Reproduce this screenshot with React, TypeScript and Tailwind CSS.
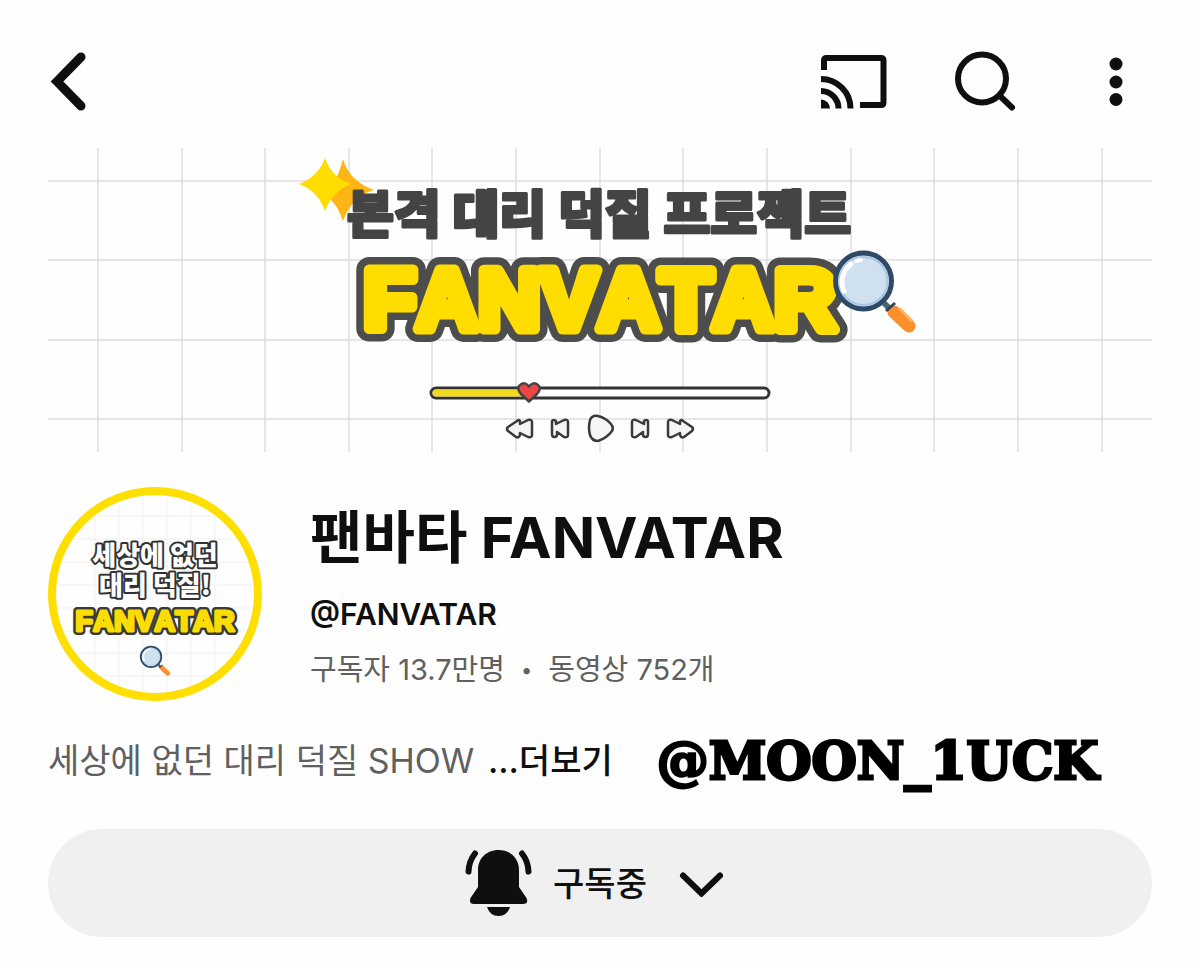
const gridX = [98, 182, 265, 349, 432, 516, 600, 683, 767, 851, 934, 1018, 1102];
const gridY = [181, 260, 340, 419];

function BackIcon() {
  return (
    <svg className="h-15 w-10" viewBox="48 51 40 60" fill="none" aria-hidden="true">
      <path d="M81 57 57 81.500 81 106" stroke="#0f0f0f" strokeWidth="9" strokeLinecap="round" />
    </svg>
  );
}

function CastIcon() {
  return (
    <svg className="h-15 w-17" viewBox="820 51 68 60" aria-hidden="true">
      <g fill="none" stroke="#0f0f0f" strokeWidth="6">
        <path d="M824 70V60.500Q824 58 826.500 58H881Q883.500 58 883.500 60.500V102.500Q883.500 105 881 105H860" />
        <path d="M821 79A29.500 29.500 0 0 1 850.500 108.500" />
        <path d="M821 91A17.500 17.500 0 0 1 838.500 108.500" />
      </g>
      <path d="M821 99.500A9 9 0 0 1 830 108.500H821Z" fill="#0f0f0f" />
    </svg>
  );
}

function SearchIcon() {
  return (
    <svg className="h-15 w-16" viewBox="952 51 64 60" fill="none" stroke="#0f0f0f" aria-hidden="true">
      <circle cx="982" cy="78.500" r="24" strokeWidth="6" />
      <path d="M1000 96 1012 107.500" strokeWidth="6" strokeLinecap="round" />
    </svg>
  );
}

function MoreIcon() {
  return (
    <svg className="h-15 w-4" viewBox="1108 51 16 60" fill="#0f0f0f" aria-hidden="true">
      <circle cx="1116" cy="64" r="6.500" />
      <circle cx="1116" cy="82" r="6.500" />
      <circle cx="1116" cy="99.500" r="6.500" />
    </svg>
  );
}

function Magnifier() {
  return (
    <g>
      <path d="M884 303 893 312" stroke="#4a6477" strokeWidth="6" />
      <path d="M894 312 909 326" stroke="#fa8f2b" strokeWidth="13" strokeLinecap="round" />
      <path d="M886 311 895 303" stroke="#2f4358" strokeWidth="3" />
      <path d="M900 309 912 321" stroke="#ffb560" strokeWidth="3" strokeLinecap="round" />
      <circle cx="863.500" cy="281" r="28" fill="#cfe0f1" stroke="#2e4a66" strokeWidth="5" />
      <circle cx="863.500" cy="281" r="24" fill="none" stroke="#a9c7e2" strokeWidth="2" />
      <path d="M844 291A22 22 0 0 1 851 264" fill="none" stroke="#fff" strokeWidth="5" strokeLinecap="round" />
      <path d="M856 261 861 260" stroke="#fff" strokeWidth="4" strokeLinecap="round" />
    </g>
  );
}

function Banner() {
  return (
    <svg className="block h-auto w-full" viewBox="48 148 1104 304" role="img" aria-label="본격 대리 덕질 프로젝트 FANVATAR">
      <g stroke="#dedede" strokeWidth="1.500">
        {gridX.map((x) => (
          <path key={x} d={`M${x} 148V452`} />
        ))}
        {gridY.map((y) => (
          <path key={y} d={`M48 ${y}H1152`} />
        ))}
      </g>

      <path d="M343 159Q349 181 374 190Q352 196 343 221Q338 205 326 195Q338 180 343 159Z" fill="#fdb515" />
      <path d="M325 158Q332 178 351 184Q332 192 325 211Q318 191 299 184Q318 177 325 158Z" fill="#ffdd00" />

      <text
        className="font-['Noto_Sans_CJK_KR',sans-serif] text-[51px] font-black"
        x="599"
        y="233"
        textAnchor="middle"
        fill="#444"
        stroke="#444"
        strokeWidth="3"
        strokeLinejoin="round"
      >
        본격 대리 덕질 프로젝트
      </text>

      <g
        className="font-['Liberation_Sans',sans-serif] text-[86px] font-bold [font-kerning:none]"
        textAnchor="middle"
        strokeLinejoin="round"
      >
        <text x="600" y="329" fill="#4d4d4d" stroke="#4d4d4d" strokeWidth="26" aria-hidden="true">
          FANVATAR
        </text>
        <text x="600" y="329" fill="#ffdd00" stroke="#ffdd00" strokeWidth="11">
          FANVATAR
        </text>
      </g>

      <Magnifier />

      <rect x="431" y="388" width="338" height="10" rx="5" fill="#fff" stroke="#333" strokeWidth="3" />
      <path d="M436 389.500H527V396.500H436Q432.500 396.500 432.500 393T436 389.500Z" fill="#f2da20" />
      <path
        d="M529 401.500 521 394Q516 388 520 385Q525 381 529 386.500Q533 381 538 385Q542 388 537 394Z"
        fill="#f04545"
        stroke="#444"
        strokeWidth="2.500"
        strokeLinejoin="round"
      />

      <g fill="#f5f5f5" stroke="#3a3a3a" strokeWidth="2.500" strokeLinejoin="round">
        <path d="M517 421Q519 419 520 421V424L528 420Q532 419 532 422V435Q532 438 528 437L520 433V435Q519 438 516 437L508 431Q506 429 508 427Z" />
        <path d="M552 421Q553 419 556 421V424L564 420Q568 419 568 422V435Q568 438 564 437L557 432V435Q557 437 554 437Q552 437 552 434Z" />
        <path d="M590 420Q592 415 598 416Q606 418 611 424Q614 428 612 431Q607 438 598 441Q592 441 590 435Q588 428 590 420Z" />
        <path d="M648 421Q647 419 644 421V424L636 420Q632 419 632 422V435Q632 438 636 437L643 432V435Q643 437 646 437Q648 437 648 434Z" />
        <path d="M683 421Q681 419 680 421V424L672 420Q668 419 668 422V435Q668 438 672 437L680 433V435Q681 438 684 437L692 431Q694 429 692 427Z" />
      </g>
    </svg>
  );
}

function Avatar() {
  return (
    <svg className="size-[214px] shrink-0" viewBox="48 487 214 214" role="img" aria-label="세상에 없던 대리 덕질! FANVATAR">
      <circle cx="155" cy="594" r="103" fill="#fefefe" />
      <g stroke="#f0f0f0" strokeWidth="1">
        <path d="M95 511V677M119 498V690M143 492V696M167 492V696M191 498V690M215 511V677" />
        <path d="M97 516H213M72 539H238M60 562H250M55 585H255M55 608H255M60 631H250M72 653H238M97 676H213" />
      </g>
      <circle cx="155" cy="594" r="103" fill="none" stroke="#ffdf00" strokeWidth="8" />
      <g
        className="font-['Noto_Sans_CJK_KR',sans-serif] text-[26px] font-black [paint-order:stroke]"
        textAnchor="middle"
        fill="#fff"
        stroke="#333"
        strokeWidth="4"
        strokeLinejoin="round"
      >
        <text x="155" y="565">세상에 없던</text>
        <text x="155" y="595">대리 덕질!</text>
      </g>
      <g
        className="font-['Liberation_Sans',sans-serif] text-[29px] font-bold [font-kerning:none]"
        textAnchor="middle"
        strokeLinejoin="round"
      >
        <text x="155" y="631" fill="#3a3a3a" stroke="#3a3a3a" strokeWidth="8" aria-hidden="true">
          FANVATAR
        </text>
        <text x="155" y="631" fill="#fbdc05" stroke="#fbdc05" strokeWidth="3">
          FANVATAR
        </text>
      </g>
      <g transform="translate(-165 554) scale(.366)">
        <Magnifier />
      </g>
    </svg>
  );
}

function BellIcon() {
  return (
    <svg className="h-17 w-17" viewBox="465 849 68 68" fill="#0f0f0f" aria-hidden="true">
      <path d="M498.500 850C486 850 478 859 478 870V887L470.500 898Q468.500 904 474 904H523Q529 904 526.500 898L519 887V870C519 859 511 850 498.500 850Z" />
      <path d="M487 907H510Q507 916 498.500 916T487 907Z" />
      <path
        d="M475 853.500Q469 861 468.500 871.500M522 853.500Q528 861 528.500 871.500"
        fill="none"
        stroke="#0f0f0f"
        strokeWidth="6"
        strokeLinecap="round"
      />
    </svg>
  );
}

function ChevronIcon() {
  return (
    <svg className="h-7 w-11" viewBox="679 869 44 28" fill="none" aria-hidden="true">
      <path d="M683 875.500 701.500 893.500 720 875.500" stroke="#0f0f0f" strokeWidth="6" strokeLinecap="round" />
    </svg>
  );
}

export default function App() {
  return (
    <div className="min-h-screen bg-[#fefefe] px-12 pb-6 font-[Inter,'Noto_Sans_CJK_KR',sans-serif] text-[#0f0f0f]">
      <header className="flex h-37 items-center justify-between pt-3.5">
        <button type="button" aria-label="뒤로">
          <BackIcon />
        </button>
        <div className="flex items-center pr-7">
          <button type="button" aria-label="전송" className="mr-16">
            <CastIcon />
          </button>
          <button type="button" aria-label="검색" className="mr-23">
            <SearchIcon />
          </button>
          <button type="button" aria-label="더보기 메뉴">
            <MoreIcon />
          </button>
        </div>
      </header>

      <main>
        <Banner />

        <section className="mt-[35px] flex items-center gap-12">
          <Avatar />
          <div className="min-w-0 pt-1">
            <h1 className="text-[57px] leading-18 font-bold whitespace-nowrap">팬바타 FANVATAR</h1>
            <p className="mt-5 text-[30px] leading-10 font-semibold">@FANVATAR</p>
            <p className="mt-4 flex items-center gap-4 text-[29px] leading-10 whitespace-nowrap text-[#606060]">
              <span>구독자 13.7만명</span>
              <span className="text-[20px]">•</span>
              <span>동영상 752개</span>
            </p>
          </div>
        </section>

        <div className="mt-7 flex items-center gap-11">
          <p className="text-[34px] leading-16 whitespace-nowrap text-[#606060]">
            세상에 없던 대리 덕질 SHOW{" "}
            <button type="button" className="ml-1 font-medium text-[#0f0f0f]">
              ...더보기
            </button>
          </p>
          <span className="font-['DejaVu_Serif',serif] text-[52px] leading-16 font-bold text-black [-webkit-text-stroke:3px_black]">
            @MOON_1UCK
          </span>
        </div>

        <button
          type="button"
          className="mt-9 flex h-27 w-full items-center justify-center rounded-full bg-[#f0f0f0] pr-3 text-[34px] font-medium"
        >
          <BellIcon />
          <span className="mr-8 ml-5">구독중</span>
          <ChevronIcon />
        </button>
      </main>
    </div>
  );
}
